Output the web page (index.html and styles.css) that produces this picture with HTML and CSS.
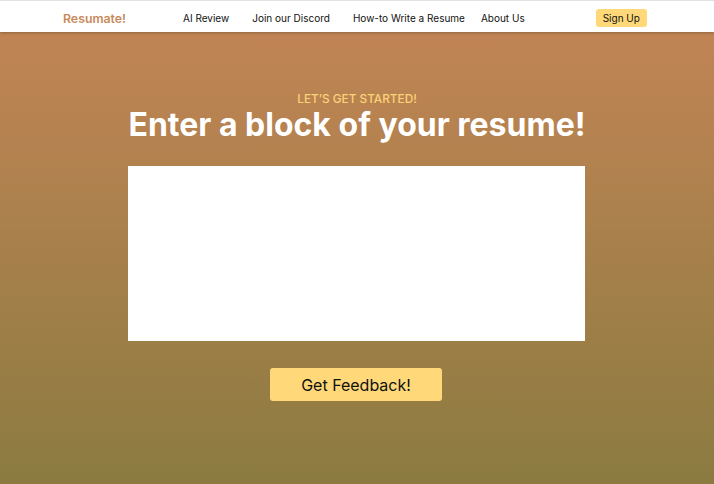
FILE: index.html
```html
<!DOCTYPE html>
<html lang="en">
<head>
<meta charset="utf-8">
<title>Resumate!</title>
<link rel="stylesheet" href="styles.css">
</head>
<body>
<header class="nav">
  <a class="logo" href="#">Resumate!</a>
  <nav class="links">
    <a href="#">AI Review</a>
    <a href="#">Join our Discord</a>
    <a href="#">How-to Write a Resume</a>
    <a class="last" href="#">About Us</a>
  </nav>
  <a class="signup" href="#">Sign Up</a>
</header>
<main class="hero">
  <p class="eyebrow">LET’S GET STARTED!</p>
  <h1 class="title">Enter a block of your resume!</h1>
  <textarea class="block"></textarea>
  <button class="cta" type="button">Get Feedback!</button>
</main>
</body>
</html>
```
FILE: styles.css
```css
html, body {
  margin: 0;
  padding: 0;
  height: 100%;
}
body {
  font-family: Inter, "Noto Sans", sans-serif;
  background: linear-gradient(180deg, #c58556 0%, #8b7b40 100%);
  border-top: 1px solid #e2e2e2;
  box-sizing: border-box;
  min-height: 484px;
}
.nav {
  height: 31px;
  box-sizing: border-box;
  padding: 3px 0 0 63px;
  background: #ffffff;
  display: flex;
  align-items: center;
  box-shadow: 0 1px 3px rgba(0,0,0,0.25);
  position: relative;
}
.nav a {
  text-decoration: none;
  color: #111111;
}
.logo {
  font-size: 12.3px;
  font-weight: 600;
  color: #c8895a !important;
  width: 120px;
}
.links {
  display: flex;
  gap: 23px;
  font-size: 10px;
}
.links .last {
  margin-left: -7px;
}
.signup {
  margin-left: 71px;
  background: #ffd979;
  font-size: 10px;
  padding: 3px 7px;
  border-radius: 3px;
  line-height: 12px;
}
.hero {
  display: flex;
  flex-direction: column;
  align-items: center;
  padding-top: 61px;
}
.eyebrow {
  margin: 0;
  font-size: 11.8px;
  font-weight: 500;
  color: #fbd276;
  line-height: 12px;
}
.title {
  margin: 2px 0 0;
  font-size: 32px;
  font-weight: 700;
  color: #ffffff;
  line-height: 35px;
}
.block {
  margin-top: 24px;
  width: 457px;
  height: 175px;
  border: none;
  background: #ffffff;
  resize: none;
  box-sizing: border-box;
  display: block;
  position: relative;
  left: -1px;
}
.cta {
  margin-top: 27px;
  width: 172px;
  height: 33px;
  border: none;
  border-radius: 3px;
  background: #ffd979;
  font-family: Inter, "Noto Sans", sans-serif;
  font-size: 16px;
  color: #111111;
  position: relative;
  left: -1px;
}
```
